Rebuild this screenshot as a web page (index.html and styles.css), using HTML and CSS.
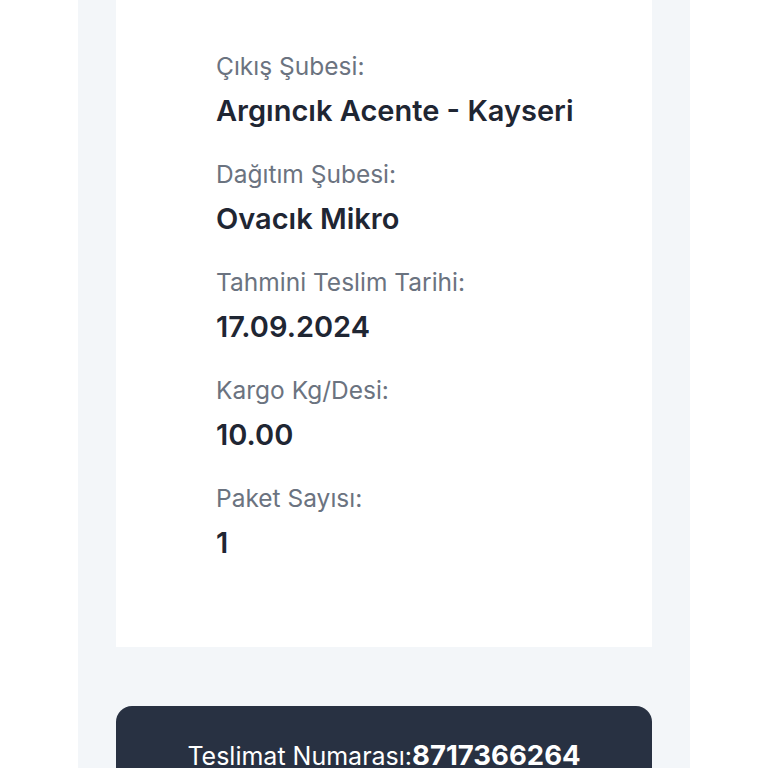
FILE: index.html
```html
<!DOCTYPE html>
<html lang="tr">
<head>
<meta charset="utf-8">
<link rel="stylesheet" href="styles.css">
</head>
<body>
<div class="panel">
  <div class="card">
    <div class="item">
      <div class="label">Çıkış Şubesi:</div>
      <div class="value">Argıncık Acente - Kayseri</div>
    </div>
    <div class="item">
      <div class="label">Dağıtım Şubesi:</div>
      <div class="value">Ovacık Mikro</div>
    </div>
    <div class="item">
      <div class="label">Tahmini Teslim Tarihi:</div>
      <div class="value">17.09.2024</div>
    </div>
    <div class="item">
      <div class="label">Kargo Kg/Desi:</div>
      <div class="value">10.00</div>
    </div>
    <div class="item">
      <div class="label">Paket Sayısı:</div>
      <div class="value">1</div>
    </div>
  </div>
  <div class="delivery">
    <span class="delivery-label">Teslimat Numarası:</span><span class="delivery-number">8717366264</span>
  </div>
</div>
</body>
</html>
```

FILE: styles.css
```css
html, body {
  margin: 0;
  padding: 0;
  background: #ffffff;
  height: 768px;
  overflow: hidden;
}
body {
  font-family: "Inter", "Noto Sans", sans-serif;
}
.panel {
  margin-left: 78px;
  width: 612px;
  height: 768px;
  background: #f3f6f9;
  padding: 0 38px;
  box-sizing: border-box;
}
.card {
  background: #ffffff;
  padding: 46px 0 61px 100px;
}
.item {
  margin-bottom: 23px;
}
.label {
  font-size: 24.5px;
  line-height: 40px;
  color: #6b7380;
  font-weight: 400;
}
.value {
  margin-top: 5px;
  font-size: 29px;
  line-height: 40px;
  color: #1f2633;
  font-weight: 600;
}
.delivery {
  margin-top: 59px;
  background: #283142;
  border-radius: 16px 16px 0 0;
  height: 120px;
  color: #ffffff;
  text-align: center;
  padding-top: 29px;
  box-sizing: border-box;
  line-height: 40px;
}
.delivery-label {
  font-size: 25px;
  font-weight: 400;
}
.delivery-number {
  font-size: 27.5px;
  font-weight: 700;
}
```
